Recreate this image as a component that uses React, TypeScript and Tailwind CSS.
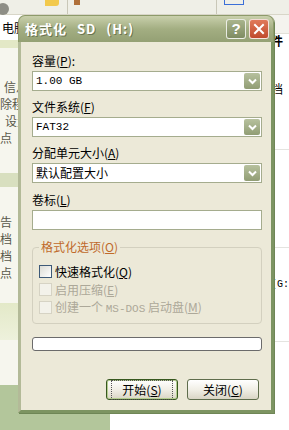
import { ReactNode } from "react";

const CJK = "font-['Noto_Sans_CJK_SC',sans-serif]";
const MONO = "font-['Liberation_Mono','Noto_Sans_CJK_SC',monospace]";

const SIDEBAR_ROWS = [
  { pad: "pl-[4px]", text: "信息" },
  { pad: "pl-0", text: "除程序" },
  { pad: "pl-[5px]", text: "设置" },
  { pad: "pl-0", text: "点" },
];

const SIDEBAR_LOWER = ["告", "档", "档", "点"];

export default function App() {
  return (
    <div className={`relative w-[289px] h-[430px] overflow-hidden bg-white text-[12px] ${CJK}`}>
      <Desktop />
      <FormatDialog />
    </div>
  );
}

function Desktop() {
  return (
    <div className="flex flex-col h-full">
      <Toolbar />
      <div className="flex flex-1">
        <Sidebar />
        <RightPane />
      </div>
    </div>
  );
}

function Toolbar() {
  return (
    <div className="h-[15px] flex items-end bg-[#efefe7] border-b border-[#d8d6c8]">
      <div className="w-[12px] h-[12px] rounded-full bg-[#8e8e86] -ml-[3px] -mb-[1px]" />
      <div className="ml-[36px] w-[14px] h-[6px] bg-[#f2c94c] rounded-br-[3px] mb-[8px]" />
      <div className="ml-[8px] w-px h-[15px] bg-[#c9c7b8]" />
      <div className="ml-[6px] w-[6px] h-[5px] bg-[#b0703a] mb-[9px]" />
      <div className="ml-[136px] w-px h-[15px] bg-[#c9c7b8]" />
      <div className="ml-[7px] w-[20px] h-[6px] border border-[#3b6fd8] border-t-0 mb-[9px]" />
    </div>
  );
}

function Sidebar() {
  return (
    <div className="w-[115px] flex flex-col bg-[#f6f6ee] text-[#58584a]">
      <div className="h-[25px] bg-white flex items-center pl-[2px]">
        <span className="text-black whitespace-nowrap">电脑</span>
      </div>
      <div className="h-[8px] bg-[#e3e8c6]" />
      <div className="mt-[32px] flex flex-col gap-[3px] leading-[14px]">
        {SIDEBAR_ROWS.map((r) => (
          <span key={r.text} className={`${r.pad} whitespace-nowrap`}>
            {r.text}
          </span>
        ))}
      </div>
      <div className="mt-[28px] h-[14px] bg-[#d8dfbf]" />
      <div className="mt-[28px] flex flex-col gap-[3px] leading-[14px]">
        {SIDEBAR_LOWER.map((t, i) => (
          <span key={i}>{t}</span>
        ))}
      </div>
      <div className="mt-[23px] h-[37px] bg-gradient-to-b from-[#e3e9c8] to-[#eef1dc]" />
      <div className="h-[45px]" />
      <div className="flex-1 bg-[#b3c69b]" />
    </div>
  );
}

function RightPane() {
  return (
    <div className="flex-1 flex flex-col bg-white text-black">
      <div className="h-[19px] bg-[#f4f3ee] border-b border-[#e2e1d8]" />
      <div className="pl-[161px] font-bold leading-[14px] text-[12px]">件</div>
      <div className="pl-[161px] mt-[34px] leading-[14px]">档</div>
      <div className="mt-[53px] h-px bg-[#e4e4e0]" />
      <div className="mt-[97px] h-px bg-[#e4e4e0]" />
      <div className={`pl-[161px] mt-[30px] leading-[14px] text-[10px] ${MONO}`}>(G:</div>
      <div className="mt-[49px] h-px bg-[#e4e4e0]" />
    </div>
  );
}

function FormatDialog() {
  return (
    <div className="absolute left-[18px] top-[15px] w-[256px] h-[398px] flex flex-col rounded-t-[7px] bg-[#ece9d8] shadow-[1px_1px_0_#6f8656]">
      <TitleBar />
      <div className="flex-1 flex flex-col border-l-[3px] border-r-[3px] border-b-[3px] border-l-[#b3ba98] border-r-[#7d9462] border-b-[#7d9462] pl-[11px] pr-[9px] text-black">
        <Label className="mt-[10px]">
          容量(<u>P</u>):
        </Label>
        <Combo value="1.00 GB" mono />
        <Label className="mt-[7px]">
          文件系统(<u>F</u>)
        </Label>
        <Combo value="FAT32" mono />
        <Label className="mt-[7px]">
          分配单元大小(<u>A</u>)
        </Label>
        <Combo value="默认配置大小" />
        <Label className="mt-[8px]">
          卷标(<u>L</u>)
        </Label>
        <div className="h-[20px] bg-white border border-[#a5ac8e]" />
        <OptionsGroup />
        <div className="mt-[13px] h-[14px] rounded-[3px] border border-[#6b6b6b] bg-white" />
        <div className="mt-[28px] flex gap-[9px] pl-[74px]">
          <XpButton primary>
            开始(<u>S</u>)
          </XpButton>
          <XpButton>
            关闭(<u>C</u>)
          </XpButton>
        </div>
      </div>
    </div>
  );
}

function TitleBar() {
  return (
    <div className="h-[27px] rounded-t-[7px] bg-gradient-to-b from-[#c9d0ac] via-[#a3ae82] to-[#94a074] border border-[#8d9a6a] border-b-0 flex items-center pl-[6px] pr-[4px]">
      <span className="text-white font-bold text-[13px] tracking-[1px] [word-spacing:6px] [text-shadow:1px_1px_0_#6b7550] whitespace-nowrap">
        格式化 SD (H:)
      </span>
      <div className="ml-auto flex gap-[3px]">
        <div className="w-[20px] h-[20px] rounded-[3px] border border-white/80 bg-gradient-to-b from-[#a9b48c] to-[#7f8c62] flex items-center justify-center text-white font-bold text-[15px] font-['Liberation_Sans',sans-serif]">
          ?
        </div>
        <div className="w-[20px] h-[20px] rounded-[3px] border border-white/80 bg-gradient-to-b from-[#e07a5a] to-[#c04a2c] flex items-center justify-center">
          <svg width="12" height="12" viewBox="0 0 12 12">
            <path d="M2 2 L10 10 M10 2 L2 10" stroke="white" strokeWidth="2" strokeLinecap="square" />
          </svg>
        </div>
      </div>
    </div>
  );
}

function Label({ children, className }: { children: ReactNode; className?: string }) {
  return <div className={`h-[18px] leading-[18px] mb-[1px] ${className ?? ""}`}>{children}</div>;
}

function Combo({ value, mono }: { value: string; mono?: boolean }) {
  return (
    <div className="h-[20px] bg-white border border-[#a5ac8e] flex items-center pl-[3px] pr-px">
      <span className={`flex-1 ${mono ? `${MONO} text-[11px]` : ""}`}>{value}</span>
      <div className="w-[16px] h-[16px] rounded-[2px] bg-gradient-to-b from-[#b7c19e] to-[#919d74] flex items-center justify-center">
        <svg width="9" height="7" viewBox="0 0 9 7">
          <path d="M1 1.5 L4.5 5 L8 1.5" stroke="white" strokeWidth="2" fill="none" />
        </svg>
      </div>
    </div>
  );
}

function OptionsGroup() {
  return (
    <div className="relative mt-[17px] h-[77px] rounded-[4px] border border-[#d3d0bf] flex flex-col pt-[17px] pl-[6px] gap-[5px]">
      <span className="absolute -top-[9px] left-[6px] px-[2px] bg-[#ece9d8] text-[#c06a2b] leading-[16px]">
        格式化选项(<u>O</u>)
      </span>
      <CheckRow label={<>快速格式化(<u>Q</u>)</>} />
      <CheckRow disabled label={<>启用压缩(<u>E</u>)</>} />
      <CheckRow
        disabled
        label={
          <>
            创建一个 <span className={`${MONO} text-[11px]`}>MS-DOS</span> 启动盘(<u>M</u>)
          </>
        }
      />
    </div>
  );
}

function CheckRow({ label, disabled }: { label: ReactNode; disabled?: boolean }) {
  return (
    <div className="flex items-center gap-[3px] h-[13px] leading-[13px]">
      <div
        className={
          disabled
            ? "w-[13px] h-[13px] border border-[#d6d3c4] bg-[#f3f2ea]"
            : "w-[13px] h-[13px] border border-[#3e5a78] bg-gradient-to-br from-[#dcdcd5] to-white"
        }
      />
      <span className={`whitespace-nowrap ${disabled ? "text-[#aca899]" : "text-black"}`}>{label}</span>
    </div>
  );
}

function XpButton({ children, primary }: { children: ReactNode; primary?: boolean }) {
  return (
    <button
      className={`w-[72px] h-[21px] rounded-[3px] border bg-gradient-to-b from-white via-[#f1efe6] to-[#d9d5c5] flex items-center justify-center text-black ${
        primary ? "border-[#37581f] shadow-[inset_0_0_0_1px_#b5cd8f]" : "border-[#5f6d4c]"
      }`}
    >
      <span className={primary ? "px-[10px] outline outline-1 outline-dotted outline-[#555]" : ""}>
        {children}
      </span>
    </button>
  );
}
